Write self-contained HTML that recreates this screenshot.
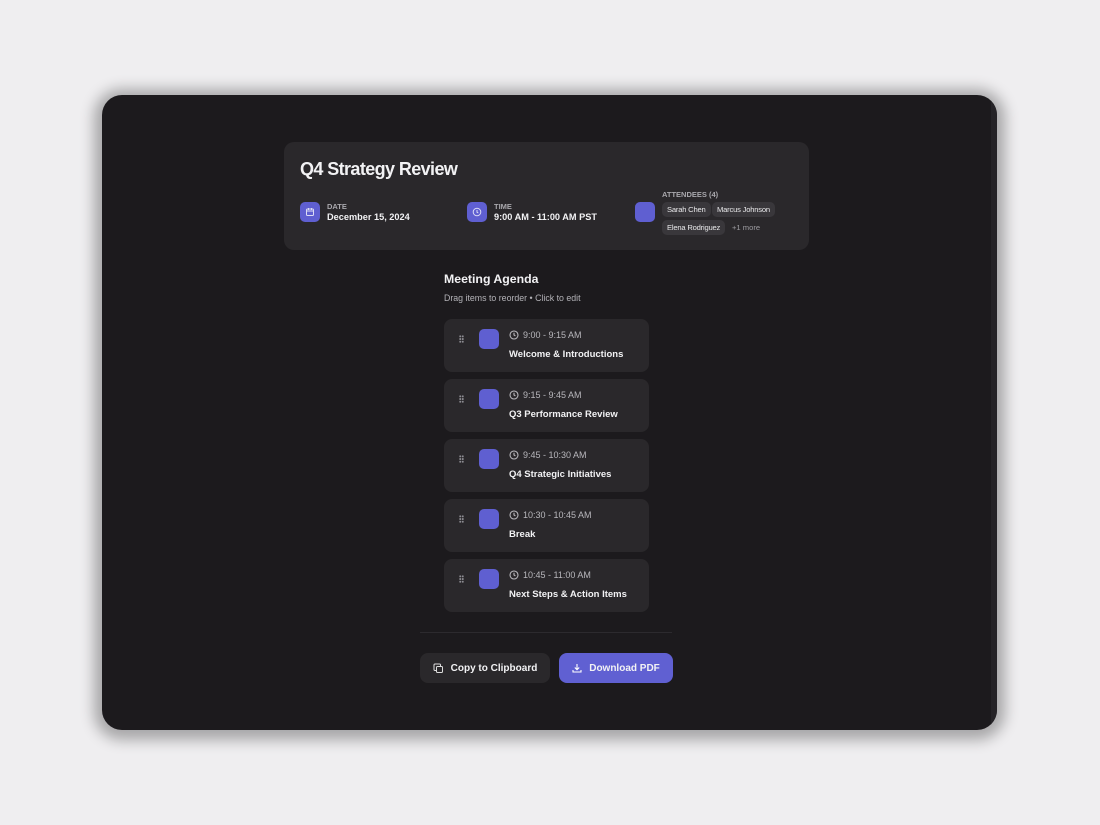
<!DOCTYPE html>
<html><head><style>
*{box-sizing:border-box;margin:0;padding:0}
body{width:1100px;height:825px;background:#efeef0;font-family:"Liberation Sans",sans-serif;position:relative;overflow:hidden;color:#f2f2f4}
.frame{position:absolute;left:102px;top:95px;width:895px;height:635px;background:#1c1a1d;border-radius:20px;box-shadow:0 2px 14px 8px rgba(0,0,0,.3);overflow:hidden}
.sb{position:absolute;right:0;top:0;width:6px;height:100%;background:#252327}
.card{position:absolute;left:182px;top:47px;width:525px;height:108px;background:#2a282b;border-radius:10px}
.title{position:absolute;left:16px;top:17px;font-size:18px;font-weight:bold;letter-spacing:-0.6px}
.ico{position:absolute;width:20px;height:20px;background:#5f5fd1;border-radius:5px;display:flex;align-items:center;justify-content:center}
.lbl{position:absolute;font-size:7.5px;font-weight:bold;color:#a9a8ad}
.val{position:absolute;font-size:9.2px;font-weight:bold}
.chip{position:absolute;font-size:7.6px;background:#39373b;border-radius:5px;padding:3px 5px;color:#e8e8ea;letter-spacing:-0.2px}
.h2{position:absolute;left:342px;top:177px;font-size:12.3px;font-weight:bold}
.sub{position:absolute;left:342px;top:198px;font-size:8.8px;color:#b3b2b7}
.item{position:absolute;left:342px;width:205px;height:53px;background:#2a282b;border-radius:8px}
.item .dots{position:absolute;left:15px;top:16px;width:5px;height:8px;background:radial-gradient(circle,#8d8c92 0.9px,transparent 1.1px) 0 0/2.5px 2.7px}
.item .sq{position:absolute;left:35px;top:10px;width:20px;height:20px;background:#5f5fd1;border-radius:5px}
.item .t{position:absolute;left:65px;top:11px;font-size:9px;color:#b8b7bc;display:flex;align-items:center;gap:4px}
.item .n{position:absolute;left:65px;top:30px;font-size:9.5px;font-weight:bold}
.hr{position:absolute;left:318px;top:537px;width:252px;height:1px;background:#2c2a2e}
.btn{position:absolute;top:558px;height:30px;border-radius:8px;font-size:10px;font-weight:bold;display:flex;align-items:center;justify-content:center;gap:7px}
</style></head><body>
<div class="frame">
<div class="sb"></div>
<div class="card">
<div class="title">Q4 Strategy Review</div>
<div class="ico" style="left:16px;top:60px"><svg width="10" height="10" viewBox="0 0 10 10" fill="none" stroke="#dcdcf5" stroke-width="1"><rect x="1.5" y="2" width="7" height="6.5" rx="1"/><path d="M1.5 4h7M3.5 1v2M6.5 1v2"/></svg></div>
<div class="lbl" style="left:43px;top:60px">DATE</div>
<div class="val" style="left:43px;top:70px">December 15, 2024</div>
<div class="ico" style="left:183px;top:60px"><svg width="10" height="10" viewBox="0 0 10 10" fill="none" stroke="#dcdcf5" stroke-width="1"><circle cx="5" cy="5" r="3.8"/><path d="M5 3v2.2l1.3.8"/></svg></div>
<div class="lbl" style="left:210px;top:60px">TIME</div>
<div class="val" style="left:210px;top:70px">9:00 AM - 11:00 AM PST</div>
<div class="ico" style="left:351px;top:60px"></div>
<div class="lbl" style="left:378px;top:48px">ATTENDEES (4)</div>
<div class="chip" style="left:378px;top:60px">Sarah Chen</div>
<div class="chip" style="left:428px;top:60px">Marcus Johnson</div>
<div class="chip" style="left:378px;top:78px">Elena Rodriguez</div>
<div style="position:absolute;left:448px;top:81px;font-size:7.6px;color:#9d9ca1">+1 more</div>
</div>
<div class="h2">Meeting Agenda</div>
<div class="sub">Drag items to reorder • Click to edit</div>

<div class="item" style="top:224px"><div class="dots"></div><div class="sq"></div><div class="t"><svg width="10" height="10" viewBox="0 0 10 10" fill="none" stroke="#b8b7bc" stroke-width="1.1"><circle cx="5" cy="5" r="4"/><path d="M5 2.8V5l1.4.9"/></svg>9:00 - 9:15 AM</div><div class="n">Welcome &amp; Introductions</div></div>
<div class="item" style="top:284px"><div class="dots"></div><div class="sq"></div><div class="t"><svg width="10" height="10" viewBox="0 0 10 10" fill="none" stroke="#b8b7bc" stroke-width="1.1"><circle cx="5" cy="5" r="4"/><path d="M5 2.8V5l1.4.9"/></svg>9:15 - 9:45 AM</div><div class="n">Q3 Performance Review</div></div>
<div class="item" style="top:344px"><div class="dots"></div><div class="sq"></div><div class="t"><svg width="10" height="10" viewBox="0 0 10 10" fill="none" stroke="#b8b7bc" stroke-width="1.1"><circle cx="5" cy="5" r="4"/><path d="M5 2.8V5l1.4.9"/></svg>9:45 - 10:30 AM</div><div class="n">Q4 Strategic Initiatives</div></div>
<div class="item" style="top:404px"><div class="dots"></div><div class="sq"></div><div class="t"><svg width="10" height="10" viewBox="0 0 10 10" fill="none" stroke="#b8b7bc" stroke-width="1.1"><circle cx="5" cy="5" r="4"/><path d="M5 2.8V5l1.4.9"/></svg>10:30 - 10:45 AM</div><div class="n">Break</div></div>
<div class="item" style="top:464px"><div class="dots"></div><div class="sq"></div><div class="t"><svg width="10" height="10" viewBox="0 0 10 10" fill="none" stroke="#b8b7bc" stroke-width="1.1"><circle cx="5" cy="5" r="4"/><path d="M5 2.8V5l1.4.9"/></svg>10:45 - 11:00 AM</div><div class="n">Next Steps &amp; Action Items</div></div>

<div class="hr"></div>
<div class="btn" style="left:318px;width:130px;background:#2a282b"><svg width="11" height="11" viewBox="0 0 11 11" fill="none" stroke="#ddd" stroke-width="1"><rect x="3.5" y="3.5" width="6" height="6" rx="1"/><path d="M7.5 3.5V2a1 1 0 0 0-1-1H2a1 1 0 0 0-1 1v4.5a1 1 0 0 0 1 1h1.5"/></svg>Copy to Clipboard</div>
<div class="btn" style="left:457px;width:114px;background:#6060d2"><svg width="10" height="10" viewBox="0 0 10 10" fill="none" stroke="#fff" stroke-width="1.1"><path d="M5 1v5.5M2.8 4.5 5 6.7l2.2-2.2M1 7v2h8V7"/></svg>Download PDF</div>
</div>
</body></html>
